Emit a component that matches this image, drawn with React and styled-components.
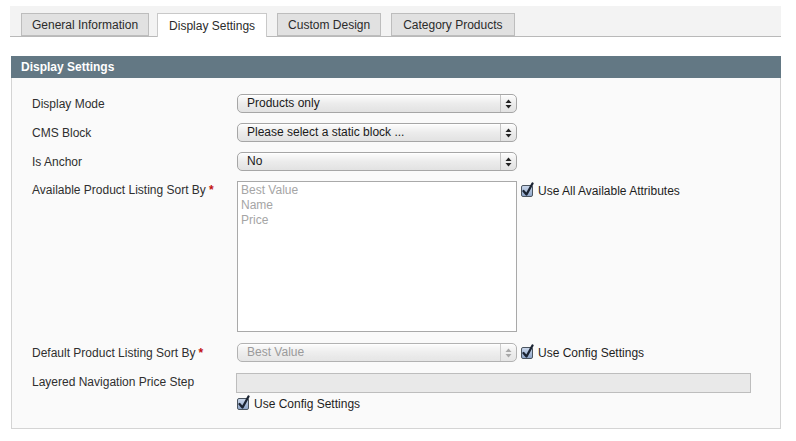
import React from "react";
import styled, { createGlobalStyle } from "styled-components";

const Global = createGlobalStyle`
  html, body { margin: 0; padding: 0; background: #fff; }
  body { font-family: "Liberation Sans", Arial, Helvetica, sans-serif; font-size: 12px; color: #2f2f2f; }
`;

const Page = styled.div`
  width: 796px;
  height: 441px;
  padding: 6px 15px 0 10px;
  box-sizing: border-box;
`;

const TabStrip = styled.div`
  display: flex;
  align-items: flex-end;
  height: 31px;
  box-sizing: border-box;
  padding: 0 0 0 11px;
  background: #f3f3f3;
  border-bottom: 1px solid #b9b9b9;
`;

const Tab = styled.div`
  height: ${(p) => (p.$active ? "24px" : "23px")};
  margin-bottom: ${(p) => (p.$active ? "-1px" : "0")};
  margin-right: ${(p) => p.$mr || 0}px;
  box-sizing: border-box;
  padding: 0 ${(p) => p.$pad}px;
  display: flex;
  align-items: center;
  font-size: 12px;
  color: #2b2b2b;
  background: ${(p) => (p.$active ? "#fff" : "#e1e1e1")};
  border: 1px solid ${(p) => (p.$active ? "#c9c9c9" : "#bdbdbd")};
  border-bottom: ${(p) => (p.$active ? "none" : "1px solid #bdbdbd")};
`;

const Section = styled.div`
  margin: 19px 0 0 1px;
`;

const SectionHead = styled.div`
  height: 22px;
  background: #637884;
  color: #fff;
  font-weight: bold;
  font-size: 12px;
  display: flex;
  align-items: center;
  padding-left: 10px;
`;

const Fieldset = styled.div`
  background: #fafafa;
  border: 1px solid #d4d4d4;
  border-top: none;
  height: 351px;
  box-sizing: border-box;
  padding: 16px 0 0 20px;
  display: flex;
  flex-direction: column;
  gap: 10px;
`;

const Row = styled.div`
  display: flex;
  align-items: ${(p) => (p.$top ? "flex-start" : "center")};
  margin-top: ${(p) => p.$mt || 0}px;
`;

const Label = styled.div`
  width: 205px;
  flex: none;
  font-size: 12px;
  color: #2f2f2f;
  padding-top: ${(p) => (p.$top ? "2px" : "0")};
`;

const Req = styled.span`
  color: #c21111;
  font-weight: bold;
  margin-left: 3px;
`;

const SelectBox = styled.div`
  width: 280px;
  height: 19px;
  box-sizing: border-box;
  border: 1px solid #a6a6a6;
  border-radius: 5px;
  background: linear-gradient(#fdfdfd, #ececec 50%, #e2e2e2);
  display: flex;
  align-items: center;
  color: ${(p) => (p.$disabled ? "#8a8a8a" : "#1a1a1a")};
  box-shadow: inset 0 1px 0 #fff;
  opacity: ${(p) => (p.$disabled ? 0.85 : 1)};
`;

const SelectText = styled.div`
  flex: 1;
  padding-left: 9px;
  font-size: 12px;
  line-height: 17px;
`;

const Arrow = styled.div`
  width: 15px;
  height: 100%;
  border-left: 1px solid #c4c4c4;
  display: flex;
  align-items: center;
  justify-content: center;
`;

const ListBox = styled.div`
  width: 280px;
  height: 151px;
  box-sizing: border-box;
  border: 1px solid #a9a9a9;
  background: #fff;
  padding: 1px 0 0 3px;
  color: #a5a5a5;
  font-size: 12px;
  line-height: 15px;
`;

const TextInput = styled.div`
  width: 515px;
  height: 20px;
  margin-left: -1px;
  box-sizing: border-box;
  border: 1px solid #bdbdbd;
  background: #e9e9e9;
`;

const Check = styled.label`
  display: flex;
  align-items: center;
  gap: 5px;
  margin-left: ${(p) => p.$ml || 0}px;
  margin-top: ${(p) => p.$mt || 0}px;
  font-size: 12px;
  color: #1e1e1e;
`;

const Box = styled.span`
  width: 12px;
  height: 12px;
  box-sizing: border-box;
  border: 1px solid #4b5560;
  border-radius: 2px;
  background: linear-gradient(#c9d6ea, #8fa6c9);
  position: relative;
  flex: none;
`;

const CheckMark = styled.svg`
  position: absolute;
  left: -1px;
  top: -4px;
`;

const Stack = styled.div`
  display: flex;
  flex-direction: column;
`;

function Arrows({ light }) {
  const c = light ? "#9a9a9a" : "#222";
  return (
    <svg width="7" height="10" viewBox="0 0 7 10">
      <path d="M3.5 0.5 L6.5 4 L0.5 4 Z" fill={c} />
      <path d="M3.5 9.5 L6.5 6 L0.5 6 Z" fill={c} />
    </svg>
  );
}

function Select({ value, disabled }) {
  return (
    <SelectBox $disabled={disabled}>
      <SelectText>{value}</SelectText>
      <Arrow>
        <Arrows light={disabled} />
      </Arrow>
    </SelectBox>
  );
}

function CheckBox({ children, ml, mt }) {
  return (
    <Check $ml={ml} $mt={mt}>
      <Box>
        <CheckMark width="14" height="15" viewBox="0 0 14 15">
          <path d="M2.5 9 L5.5 12.5 L11.5 1.5" fill="none" stroke="#1b2433" strokeWidth="2.3" strokeLinecap="round" strokeLinejoin="round" />
        </CheckMark>
      </Box>
      {children}
    </Check>
  );
}

export default function App() {
  return (
    <>
      <Global />
      <Page>
        <TabStrip>
          <Tab $pad={10} $mr={8}>General Information</Tab>
          <Tab $pad={11} $mr={10} $active>Display Settings</Tab>
          <Tab $pad={10} $mr={10}>Custom Design</Tab>
          <Tab $pad={11}>Category Products</Tab>
        </TabStrip>
        <Section>
          <SectionHead>Display Settings</SectionHead>
          <Fieldset>
            <Row>
              <Label>Display Mode</Label>
              <Select value="Products only" />
            </Row>
            <Row>
              <Label>CMS Block</Label>
              <Select value="Please select a static block ..." />
            </Row>
            <Row>
              <Label>Is Anchor</Label>
              <Select value="No" />
            </Row>
            <Row $top>
              <Label $top>
                Available Product Listing Sort By<Req>*</Req>
              </Label>
              <ListBox>
                <div>Best Value</div>
                <div>Name</div>
                <div>Price</div>
              </ListBox>
              <CheckBox ml={4} mt={3}>Use All Available Attributes</CheckBox>
            </Row>
            <Row $mt={1}>
              <Label>
                Default Product Listing Sort By<Req>*</Req>
              </Label>
              <Select value="Best Value" disabled />
              <CheckBox ml={4}>Use Config Settings</CheckBox>
            </Row>
            <Row $top $mt={1}>
              <Label $top>Layered Navigation Price Step</Label>
              <Stack>
                <TextInput />
                <CheckBox mt={4}>Use Config Settings</CheckBox>
              </Stack>
            </Row>
          </Fieldset>
        </Section>
      </Page>
    </>
  );
}
